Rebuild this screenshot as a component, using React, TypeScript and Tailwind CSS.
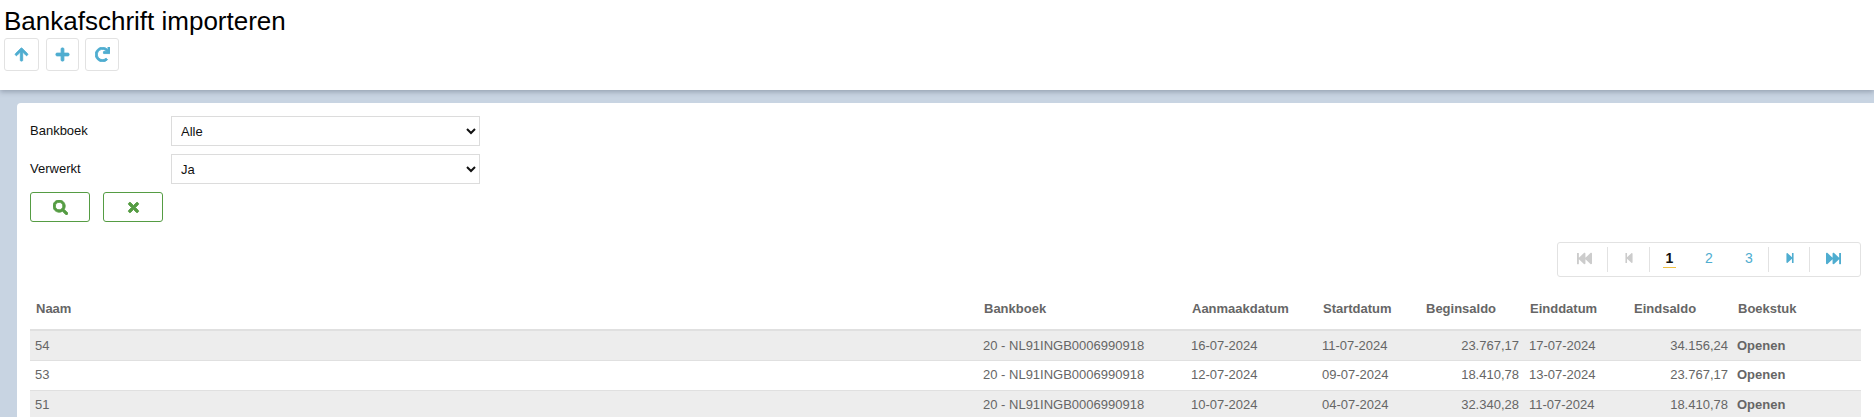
import React from "react";
import { FaArrowUp, FaPlus, FaRedo, FaSearch, FaTimes, FaFastBackward, FaStepBackward, FaStepForward, FaFastForward } from "react-icons/fa";

const rows = [
  ["54", "20 - NL91INGB0006990918", "16-07-2024", "11-07-2024", "23.767,17", "17-07-2024", "34.156,24"],
  ["53", "20 - NL91INGB0006990918", "12-07-2024", "09-07-2024", "18.410,78", "13-07-2024", "23.767,17"],
  ["51", "20 - NL91INGB0006990918", "10-07-2024", "04-07-2024", "32.340,28", "11-07-2024", "18.410,78"],
];

const heads = [
  { t: "Naam", c: "w-[948px]" },
  { t: "Bankboek", c: "w-[208px]" },
  { t: "Aanmaakdatum", c: "w-[131px]" },
  { t: "Startdatum", c: "w-[103px]" },
  { t: "Beginsaldo", c: "w-[104px]" },
  { t: "Einddatum", c: "w-[104px]" },
  { t: "Eindsaldo", c: "w-[104px]" },
  { t: "Boekstuk", c: "" },
];

function ToolButton({ children, w }: { children: React.ReactNode; w: string }) {
  return (
    <button className={`flex h-[33px] items-center justify-center rounded-[3px] border border-[#e2e2e2] bg-white text-[15px] text-[#4fadd0] ${w}`}>
      {children}
    </button>
  );
}

function FilterRow({ label, value }: { label: string; value: string }) {
  return (
    <div className="flex h-[30px] items-start">
      <label className="w-[141px] pt-[6px] text-[13px] leading-[18px] text-[#111]">{label}</label>
      <select defaultValue={value} className="h-[30px] w-[309px] rounded-none border border-[#dcdcdc] bg-white pl-[5px] text-[13px] text-[#111]">
        <option>{value}</option>
      </select>
    </div>
  );
}

function Sep({ m }: { m: string }) {
  return <span className={`block h-[25px] w-px bg-[#e2e2e2] ${m}`} />;
}

const thick = "stroke-current stroke-[30]";

export default function App() {
  return (
    <div className="h-[417px] overflow-hidden bg-[#c8d4e2] font-['Liberation_Sans',Arial,sans-serif]">
      <header className="h-[90px] bg-white pl-[4px] pt-[7px] shadow-[0_2px_5px_rgba(90,100,120,0.45)]">
        <h1 className="text-[26px] leading-[29px] text-black">Bankafschrift importeren</h1>
        <div className="mt-[2px] flex">
          <ToolButton w="w-[35px]"><FaArrowUp className={thick} /></ToolButton>
          <div className="ml-[7px]"><ToolButton w="w-[33px]"><FaPlus className={thick} /></ToolButton></div>
          <div className="ml-[6px]"><ToolButton w="w-[34px]"><FaRedo className={thick} /></ToolButton></div>
        </div>
      </header>

      <main className="ml-[17px] mt-[13px] h-[314px] rounded-tl-[4px] bg-white pl-[13px] pr-[13px] pt-[13px]">
        <div className="flex flex-col gap-[8px]">
          <FilterRow label="Bankboek" value="Alle" />
          <FilterRow label="Verwerkt" value="Ja" />
        </div>
        <div className="mt-[8px] flex gap-[13px]">
          <button className="flex h-[30px] w-[60px] items-center justify-center rounded-[3px] border border-[#559c43] bg-white text-[15px] text-[#559c43]"><FaSearch className={thick} /></button>
          <button className="flex h-[30px] w-[60px] items-center justify-center rounded-[3px] border border-[#559c43] bg-white text-[15px] text-[#559c43]"><FaTimes className={thick} /></button>
        </div>

        <div className="mt-[20px] flex justify-end">
          <nav className="flex h-[35px] w-[304px] items-center rounded-[3px] border border-[#e2e2e2] pl-[19px]">
            <FaFastBackward className="mb-[3px] h-[15px] w-[15px] shrink-0 text-[#ccc]" />
            <Sep m="ml-[15px]" />
            <FaStepBackward className="mb-[3px] ml-[16px] h-[12px] w-[10px] shrink-0 text-[#ccc]" />
            <Sep m="ml-[15px]" />
            <span className="relative mb-[3px] ml-[13px] w-[13px] text-center text-[14px] font-bold text-[#111]">
              1
              <span className="absolute left-0 top-[19px] h-px w-[13px] bg-[#f0c040]" />
            </span>
            <span className="mb-[3px] ml-[29px] w-[8px] text-[14px] text-[#4fadd0]">2</span>
            <span className="mb-[3px] ml-[32px] w-[8px] text-[14px] text-[#4fadd0]">3</span>
            <Sep m="ml-[15px]" />
            <FaStepForward className="mb-[3px] ml-[16px] h-[12px] w-[10px] shrink-0 text-[#4fadd0]" />
            <Sep m="ml-[14px]" />
            <FaFastForward className="mb-[3px] ml-[16px] h-[15px] w-[15px] shrink-0 text-[#4fadd0]" />
          </nav>
        </div>

        <table className="w-full table-fixed border-collapse text-[13px] text-[#666]">
          <thead>
            <tr className="h-[53px] border-b-[2px] border-[#e0e0e0]">
              {heads.map((h) => (
                <th key={h.t} className={`pl-[6px] pt-[12px] text-left font-bold ${h.c}`}>{h.t}</th>
              ))}
            </tr>
          </thead>
          <tbody>
            {rows.map((r, i) => (
              <tr key={r[0]} className={`h-[30px] border-b border-[#e0e0e0] ${i % 2 === 0 ? "bg-[#ededed]" : "bg-white"}`}>
                <td className="pl-[5px]">{r[0]}</td>
                <td className="pl-[5px]">{r[1]}</td>
                <td className="pl-[5px]">{r[2]}</td>
                <td className="pl-[5px]">{r[3]}</td>
                <td className="pr-[5px] text-right">{r[4]}</td>
                <td className="pl-[5px]">{r[5]}</td>
                <td className="pr-[4px] text-right">{r[6]}</td>
                <td className="pl-[5px] font-bold">Openen</td>
              </tr>
            ))}
          </tbody>
        </table>
      </main>
    </div>
  );
}
